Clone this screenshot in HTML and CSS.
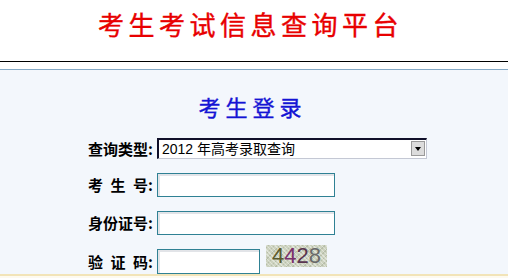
FILE: index.html
```html
<!DOCTYPE html>
<html lang="zh-CN">
<head>
  <meta charset="UTF-8">
  <meta name="viewport" content="width=device-width, initial-scale=1.0">
  <title>考生考试信息查询平台</title>
  <link rel="stylesheet" href="styles.css">
</head>
<body>
  <div class="header">
    <h1>考生考试信息查询平台</h1>
  </div>

  <div class="main">
    <h2>考生登录</h2>

    <form class="login">
      <label for="type">查询类型:</label>
      <div class="select-box">
        <select id="type">
          <option>2012 年高考录取查询</option>
        </select>
        <span class="arrow"></span>
      </div>

      <label for="ksh">考&ensp;生&ensp;号:</label>
      <input type="text" id="ksh" class="field">

      <label for="sfz">身份证号:</label>
      <input type="text" id="sfz" class="field">

      <label for="yzm">验&ensp;证&ensp;码:</label>
      <div class="code-row">
        <input type="text" id="yzm" class="field short">
        <div class="captcha">
          <span class="d1">4</span><span class="d2">4</span><span class="d3">2</span><span class="d4">8</span>
        </div>
      </div>
    </form>
  </div>

  <div class="footer"></div>
</body>
</html>
```

FILE: styles.css
```css
body {
  margin: 0;
  padding: 0;
  background-color: #ffffff;
  font-family: "Liberation Sans", "Noto Sans CJK SC", sans-serif;
}

.header {
  height: 62px;
  border-bottom: 1px solid #000000;
  box-sizing: border-box;
  display: flex;
  justify-content: center;
}

h1 {
  margin: 6px 0 0 -7px;
  font-family: "Noto Sans CJK SC", sans-serif;
  font-size: 26px;
  line-height: 36px;
  font-weight: normal;
  letter-spacing: 4.5px;
  color: #e80000;
  -webkit-text-stroke: 0.4px #e80000;
}

.main {
  margin-top: 7px;
  height: 205px;
  overflow: hidden;
  background-color: #f3f7fc;
  border-top: 1px solid #84a9c6;
  box-sizing: border-box;
  padding-top: 22px;
}

h2 {
  margin: 0 0 0 -3px;
  text-align: center;
  font-family: "Noto Sans CJK SC", sans-serif;
  font-size: 22px;
  line-height: 28px;
  font-weight: normal;
  letter-spacing: 5px;
  color: #1414d4;
  -webkit-text-stroke: 0.4px #1414d4;
}

.login {
  margin-top: 18px;
  display: grid;
  grid-template-columns: 153px auto;
  column-gap: 4px;
  row-gap: 14px;
  align-items: center;
}

.login label {
  text-align: right;
  font-family: "Noto Sans CJK SC", sans-serif;
  font-size: 15px;
  font-weight: bold;
  color: #000000;
  line-height: 20px;
}

.select-box {
  position: relative;
  width: 270px;
  height: 21px;
  box-sizing: border-box;
  background: #ffffff;
  border-top: 2px solid #10102a;
  border-left: 2px solid #10102a;
  border-right: 1px solid #c4c8d4;
  border-bottom: 1px solid #c4c8d4;
}

.select-box select {
  appearance: none;
  -webkit-appearance: none;
  border: none;
  background: transparent;
  width: 100%;
  height: 18px;
  padding: 0 0 0 3px;
  font-family: "Liberation Sans", "Noto Sans CJK SC", sans-serif;
  font-size: 14px;
  color: #000000;
  outline: none;
}

.arrow {
  position: absolute;
  right: 1px;
  top: 1px;
  width: 14px;
  height: 15px;
  background: #dcdcdc;
  border: 1px solid #9a9a9a;
  box-sizing: border-box;
}

.arrow::after {
  content: "";
  position: absolute;
  left: 3px;
  top: 5px;
  border-left: 3.5px solid transparent;
  border-right: 3.5px solid transparent;
  border-top: 4px solid #000000;
}

.field {
  width: 178px;
  height: 24px;
  box-sizing: border-box;
  border: 1px solid #2f8194;
  box-shadow: inset 2px 2px 0 #e2e4e8;
  background: #ffffff;
  margin: 0;
  padding: 0 3px;
  outline: none;
}

.field.short {
  width: 103px;
  height: 25px;
}

.code-row {
  display: flex;
  align-items: flex-start;
}

.captcha {
  margin: -4px 0 0 6px;
  width: 61px;
  height: 22px;
  background-color: #ccd2bf;
  background-image:
    repeating-linear-gradient(45deg, rgba(255,255,255,0.4) 0 1px, transparent 1px 3px),
    repeating-linear-gradient(-45deg, rgba(120,130,100,0.25) 0 1px, transparent 1px 4px);
  font-family: "Liberation Sans", sans-serif;
  font-size: 22px;
  line-height: 22px;
  text-align: center;
}

.d1 { color: #5b5a2c; }
.d2 { color: #7a2f6c; }
.d3 { color: #5a3550; }
.d4 { color: #6a6a6a; }

.footer {
  border-top: 2px solid #f2e4b8;
  height: 20px;
  background: #fdfaf0;
}
```
